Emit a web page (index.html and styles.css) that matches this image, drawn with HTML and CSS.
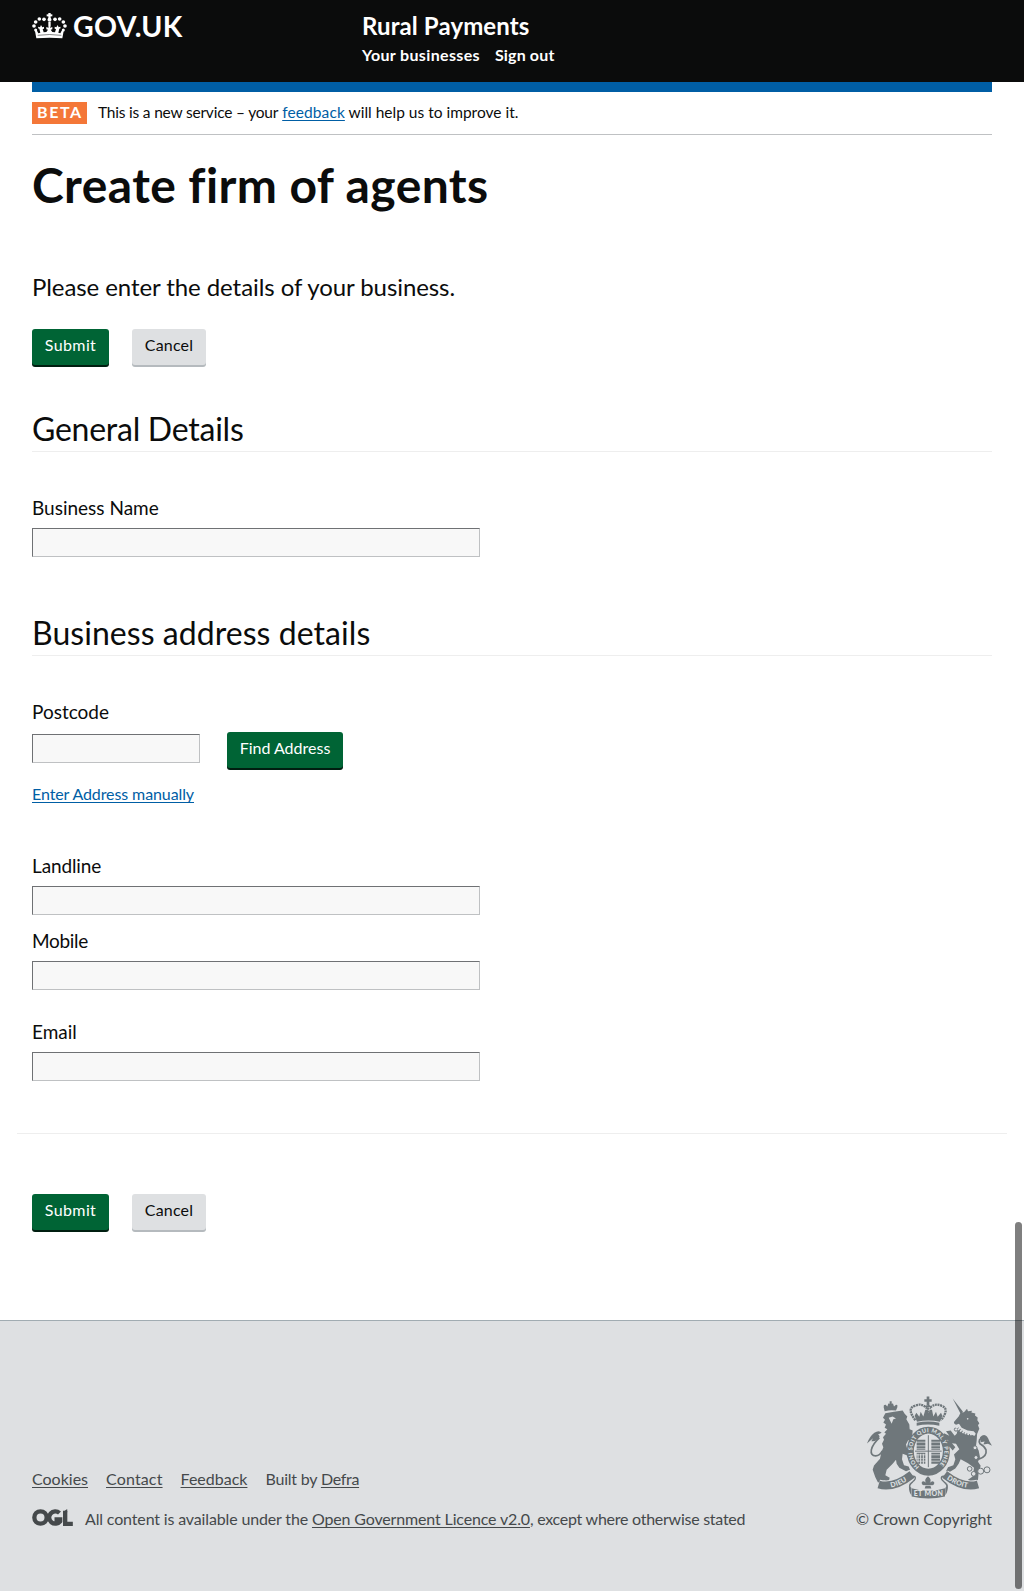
FILE: index.html
```html
<!DOCTYPE html>
<html lang="en">
<head>
<meta charset="utf-8">
<title>Create firm of agents - Rural Payments - GOV.UK</title>
<link rel="stylesheet" href="styles.css">
</head>
<body>
<header class="site-header">
  <div class="wrap site-header__inner">
    <a class="logo" href="#">
      <svg class="logo__crown" viewBox="96 36 105 81" aria-hidden="true">
        <g fill="#fff">
          <rect x="145" y="39" width="7" height="22"/><rect x="140" y="43" width="17" height="6"/>
          <circle cx="148.500" cy="59" r="6"/>
          <circle cx="132" cy="58" r="5.500"/><circle cx="118" cy="57" r="5.500"/><circle cx="107" cy="66" r="5.500"/><circle cx="102" cy="78" r="5.500"/><circle cx="107" cy="90" r="4.500"/>
          <circle cx="165" cy="58" r="5.500"/><circle cx="179" cy="57" r="5.500"/><circle cx="190" cy="66" r="5.500"/><circle cx="195" cy="78" r="5.500"/><circle cx="190" cy="90" r="4.500"/>
          <path d="M145 66h7v14h-7zM104 88l7 4 4 8 6-2-3-12-4-1 1-5 5 2 3-7 4 7 5-2v6l-4 1 3 10 8-1 5-7-5-1v-7l6 2 3-6 3 6 6-2v7l-5 1 5 7 8 1 3-10-4-1v-6l5 2 4-7 3 7 5-2 1 5-4 1-3 12 6 2 4-8 7-4-5 27q-37-4-78 0z"/>
        </g>
        <path d="M113 106q35-5 71 0" fill="none" stroke="#0b0c0c" stroke-width="1.500"/>
      </svg>
      <span class="logo__text">GOV.UK</span>
    </a>
    <div class="service">
      <a class="service__name" href="#">Rural Payments</a>
      <nav class="service__nav"><a class="nav-business" href="#">Your businesses</a><a href="#">Sign out</a></nav>
    </div>
  </div>
</header>

<main class="wrap">
  <div class="phase-banner">
    <strong class="phase-tag">BETA</strong>
    <span class="phase-text"><span class="phase-start">This is a new service – your</span> <a href="#">feedback</a> will help us to improve it.</span>
  </div>
  <h1 class="title">Create firm of agents</h1>
  <p class="lead">Please enter the details of your business.</p>
  <form>
    <div class="actions">
      <button class="button" type="button">Submit</button>
      <button class="button button--secondary" type="button">Cancel</button>
    </div>

    <h2 class="section-title section-title--general">General Details</h2>
    <div class="field"><label for="name">Business Name</label><input id="name" type="text"></div>

    <h2 class="section-title section-title--address">Business address details</h2>
    <div class="field field--postcode">
      <label for="postcode">Postcode</label>
      <div class="lookup"><input id="postcode" type="text"><button class="button button--find" type="button">Find Address</button></div>
    </div>
    <a class="manual-link" href="#">Enter Address manually</a>

    <div class="field field--landline"><label for="landline">Landline</label><input id="landline" type="text"></div>
    <div class="field field--mobile"><label for="mobile">Mobile</label><input id="mobile" type="text"></div>
    <div class="field field--email"><label for="email">Email</label><input id="email" type="text"></div>

    <hr class="divider">
    <div class="actions actions--bottom">
      <button class="button" type="button">Submit</button>
      <button class="button button--secondary" type="button">Cancel</button>
    </div>
  </form>
</main>

<footer class="site-footer">
  <div class="wrap site-footer__inner">
    <div class="footer-meta">
      <ul class="footer-links">
        <li><a href="#">Cookies</a></li>
        <li><a class="link-contact" href="#">Contact</a></li>
        <li><a href="#">Feedback</a></li>
        <li class="built-by">Built by <a class="link-defra" href="#">Defra</a></li>
      </ul>
      <div class="licence">
        <svg class="ogl" viewBox="0 0 122 51" aria-hidden="true">
          <g fill="none" stroke="#45494b">
            <circle cx="25" cy="25.500" r="18.500" stroke-width="13"/>
            <path d="M82 12A18.500 18.500 0 1 0 84 37V31H67" stroke-width="13"/>
            <path d="M99 5V45H122" stroke-width="13"/>
          </g>
          <path d="M92 10L105 0V10z" fill="#45494b"/>
        </svg>
        <p class="licence__text">All content is available under the <a href="#">Open Government Licence v2.0</a><span class="licence__end">, except where otherwise stated</span></p>
      </div>
    </div>
    <div class="copyright">
      <svg class="arms" viewBox="69 47 375 308" aria-hidden="true">
        <defs>
          <path id="garter" d="M226 259A48 57 0 1 1 280 259"/>
          <path id="dieu" d="M104 312Q150 325 204 282"/>
          <path id="droit" d="M302 282Q356 325 402 312"/>
        </defs>
        <g fill="#6f777b">
          <!-- lion -->
          <path d="M122 92l-3-12q-1-8 6-7l5 5 3-9 4 1v-8h6v8l4-1 3 9 6-5q6-1 4 7l-4 10q-17-3-34 2z"/>
          <path d="M124 98L117 112 123 118 118 126 126 132 122 142 130 146 121 156 126 160 117 170 120 178 114 190 118 200 112 215 108 235 90 255 86 268 94 290 102 306 122 300 134 304 137 292 124 284 128 268 146 250 156 238 158 250 166 262 186 272 198 268 194 258 180 254 174 236 176 220 188 224 194 236 200 226 190 206 186 192 192 180 204 176 206 150 197 146 196 132 187 116 190 108 182 100 176 90 150 94z"/>
          <path d="M69 189q7-20 22-32 14-9 22 0l-11 5q8 5 2 12-11 10-22 8l5-9z"/>
          <path d="M106 172q-20 18-24 36-3 17 13 18 12 0 20-15" fill="none" stroke="#6f777b" stroke-width="5"/>
          <!-- unicorn -->
          <path d="M326 54l31 40-8 4zM350 96l10-1 9-10 3 7 12-1-2 5 12 3-1 6 8 6-1 8 6 9-4 6 4 11-8 18-9-11-18-2-18-8-8-12-9 3q-9-4-5-10l13-15z"/>
          <path d="M343 140L362 156 392 166 400 150 398 180 396 196 404 210 408 230 402 244 410 256 404 275 402 298 384 308 372 298 386 288 390 262 372 248 350 236 344 250 334 264 318 274 306 272 312 260 328 254 334 236 330 222 346 206 336 190 324 188 334 200 326 210 318 200 308 192 313 180 298 170 300 158 316 166 306 152 320 150 332 166 338 160z"/>
          <path d="M408 170q18-17 28 12l8 14-12-6-14 2 4-9-12 2z"/>
          <path d="M404 236q26-8 22-28-4-10-18-18-8-14 10-20" fill="none" stroke="#6f777b" stroke-width="5"/>
          <!-- crown -->
          <path d="M248 48h8v8h7v8h-7v10h-8v-10h-7v-8h7zM219 124l-7-18 5-9 9 12 4-15 8 14 6-20h7l3 10 3-10h7l4 20 8-14 5 15 10-12 4 9-7 18q-34-8-69 0zM218 127q35-8 68 0v9q-34-8-68 0z"/>
        </g>
        <g fill="none" stroke="#6f777b">
          <path d="M214 119Q187 84 212 76q20-9 34 5 6-9 13 0 15-14 34-5 25 9-2 43M252 74v28" stroke-width="7" stroke-dasharray="6 2"/>
          <ellipse cx="253" cy="212" rx="54" ry="63" stroke-width="21"/>
          <g stroke-width="3" fill="#dee0e2">
            <circle cx="336" cy="147" r="5"/><circle cx="393" cy="202" r="6"/><circle cx="396" cy="231" r="6"/><circle cx="377" cy="265" r="7"/><circle cx="389" cy="280" r="7"/><circle cx="410" cy="272" r="9"/><circle cx="429" cy="268" r="9"/>
          </g>
          <path d="M231 178v72M275 178v72" stroke-width="26" stroke-dasharray="6 2 9 2"/>
          <path d="M253 160v102M211 212h84" stroke="#dee0e2" stroke-width="8"/>
          <path d="M253 164v96M213 212h80" stroke-width="3"/>
          <path d="M222 220v26M230 220v32M238 220v34" stroke="#dee0e2" stroke-width="3"/>
        </g>
        <path d="M337 138q24 26 54 22" fill="none" stroke="#dee0e2" stroke-width="8" stroke-dasharray="5 3"/>
        <path d="M134 112l12-4 10 6-8 2-5 14z" fill="#dee0e2"/>
        <circle cx="371" cy="115" r="2.500" fill="#dee0e2"/>
        <!-- motto ribbons -->
        <g fill="none" stroke="#dee0e2" stroke-width="30"><use href="#dieu"/><use href="#droit"/></g>
        <g fill="none" stroke="#6f777b" stroke-width="24"><use href="#dieu"/><use href="#droit"/></g>
        <path d="M192 293q16-9 21-4 4 6-7 15-13 9-8 22M314 293q-16-9-21-4-4 6 7 15 13 9 8 22" fill="none" stroke="#6f777b" stroke-width="4"/>
        <g fill="#6f777b">
          <path d="M203 323q50 15 100 0v25q-50 12-100 0z"/>
          <path d="M198 304q-3 14 4 18v22q-8-8-7-28zM308 304q3 14-4 18v22q8-8 7-28z"/>
          <path d="M252 287q13 11 5 20 11-9 14 0-1 10-12 8l3 9h-20l3-9q-12 1-12-9 4-8 14 1-9-9 5-20z"/>
          <path d="M238 315h28" stroke="#dee0e2" stroke-width="2"/>
        </g>
        <g class="arms__motto">
          <text class="arms__garter"><textPath href="#garter" textLength="262">HONI SOIT QUI MAL Y PENSE</textPath></text>
          <text dy="7"><textPath href="#dieu" startOffset="36" textLength="50">DIEU</textPath></text>
          <text dy="7"><textPath href="#droit" startOffset="12" textLength="66">DROIT</textPath></text>
          <text x="209" y="346" textLength="88">ET MON</text>
        </g>
      </svg>
      <a href="#">© Crown Copyright</a>
    </div>
  </div>
</footer>
<div class="scroll-thumb"></div>
</body>
</html>
```
FILE: styles.css
```css
* { box-sizing: border-box; }
body {
  margin: 0;
  background: #fff;
  color: #0b0c0c;
  font: 16px/20px Lato, "Liberation Sans", sans-serif;
  font-variant-ligatures: none;
  text-decoration-skip-ink: none;
}
h1, h2, p, ul { margin: 0; padding: 0; font-weight: 400; }
a { color: #005ea5; text-underline-offset: 2px; text-decoration-thickness: 1px; }
.wrap { margin: 0 32px; }

/* Header */
.site-header { height: 82px; background: #0b0c0c; }
.site-header a { color: #fff; font-weight: 700; text-decoration: none; }
.site-header__inner { display: flex; }
.logo { display: flex; align-items: flex-start; width: 330px; padding-top: 11px; }
.logo__crown { width: 35px; height: 27px; margin: 1px 6px 0 0; }
.logo__text { font-size: 28.5px; line-height: 30px; letter-spacing: .3px; }
.service { padding-top: 11px; }
.service__name { display: block; font-size: 24px; line-height: 30px; letter-spacing: .1px; }
.service__nav { display: flex; gap: 15px; margin-top: 4px; letter-spacing: .15px; }
.nav-business { letter-spacing: .35px; }

/* Phase banner */
.phase-banner {
  display: flex;
  gap: 11px;
  height: 53px;
  padding-top: 10px;
  border-top: 10px solid #005ea5;
  border-bottom: 1px solid #bfc1c3;
}
.phase-tag {
  width: 55px;
  height: 22px;
  padding-left: 5px;
  background: #f47738;
  color: #fff;
  letter-spacing: 1.6px;
}
.phase-text { font-size: 15.5px; }
.phase-text a { letter-spacing: .1px; }
.phase-start { letter-spacing: -.2px; }

.title { margin-top: 25px; font-size: 48px; line-height: 50px; font-weight: 700; letter-spacing: .4px; }
.lead { margin-top: 62px; font-size: 24px; line-height: 30px; letter-spacing: -.08px; }

/* Buttons */
.actions { display: flex; gap: 23px; margin-top: 27px; }
.button {
  width: 77px;
  height: 36px;
  margin-bottom: 2px;
  padding: 0 0 4px;
  border: 0;
  border-radius: 3px;
  background: #006435;
  box-shadow: 0 2px 0 #001e10;
  color: #fff;
  font: inherit;
  letter-spacing: .4px;
}
.button--secondary { width: 74px; background: #dee0e2; box-shadow: 0 2px 0 #b5babe; color: #0b0c0c; letter-spacing: .2px; }
.button--find { width: 116px; letter-spacing: 0; }
.actions--bottom { margin-top: 60px; }

/* Form */
.section-title { height: 41px; margin: 0 0 43px; padding-top: 1px; border-bottom: 1px solid #eee; font-size: 32px; line-height: 35px; box-sizing: content-box; height: 40px; }
.section-title--general { margin-top: 43px; letter-spacing: -.25px; }
.section-title--address { margin-top: 57px; letter-spacing: .05px; }
label { display: block; margin-bottom: 8px; font-size: 19px; line-height: 25px; }
input {
  display: block;
  width: 448px;
  height: 29px;
  border: 1px solid;
  border-color: #6f7174 #bfc1c3 #bfc1c3 #6f7174;
  background: #f8f8f8;
}
.lookup { display: flex; align-items: flex-start; gap: 27px; }
.lookup input { width: 168px; margin-top: 2px; }
.manual-link { display: block; margin-top: 14px; letter-spacing: -.1px; }
.field--landline { margin-top: 49px; }
.field--landline label { letter-spacing: -.12px; }
.field--mobile { margin-top: 13px; }
.field--mobile label { letter-spacing: -.3px; }
.field--email { margin-top: 29px; }
.divider { height: 1px; margin: 52px -15px 0; border: 0; background: #eee; }

/* Footer */
.site-footer { height: 271px; margin-top: 88px; border-top: 1px solid #a1acb2; background: #dee0e2; color: #45494b; }
.site-footer a { color: inherit; }
.site-footer__inner { display: flex; justify-content: space-between; align-items: flex-end; height: 208px; }
.footer-links { display: flex; gap: 18px; margin-bottom: 20px; list-style: none; }
.link-contact { letter-spacing: .15px; }
.built-by { letter-spacing: -.2px; }
.link-defra { letter-spacing: -.3px; }
.licence { display: flex; gap: 12px; }
.ogl { width: 41px; height: 17px; }
.licence__text { letter-spacing: -.15px; }
.licence__end { letter-spacing: -.26px; }
.copyright { display: flex; flex-direction: column; align-items: flex-end; gap: 10px; }
.copyright a { text-decoration: none; letter-spacing: -.05px; }
.arms { width: 125px; height: 103px; }
.arms__motto { fill: #dee0e2; font-size: 21px; line-height: 1; font-weight: 900; }
.arms__garter { font-size: 17px; }

/* Overlay scroll indicator */
.scroll-thumb { position: absolute; top: 1222px; right: 2px; width: 7px; height: 367px; border-radius: 4px; background: rgba(0, 0, 0, .5); }
```
